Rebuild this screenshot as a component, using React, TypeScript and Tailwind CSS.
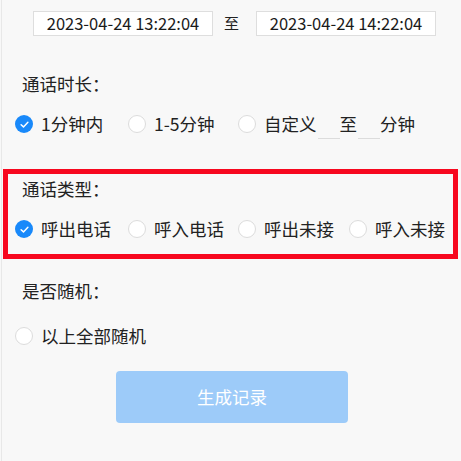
import React from "react";

const font = { fontFamily: '"Noto Sans CJK SC", "Noto Sans", sans-serif' };

function Radio({ checked, label }: { checked?: boolean; label?: string }) {
  return (
    <div className="flex items-center">
      {checked ? (
        <span className="flex h-[18px] w-[18px] shrink-0 items-center justify-center rounded-full bg-[#1989fa]">
          <svg width="11" height="11" viewBox="0 0 12 12" fill="none">
            <path d="M2.3 6.2 L4.9 8.6 L9.7 3.6" stroke="#fff" strokeWidth="1.6" strokeLinecap="round" strokeLinejoin="round" />
          </svg>
        </span>
      ) : (
        <span className="h-[18px] w-[18px] shrink-0 rounded-full border border-[#dcdcdc] bg-white" />
      )}
      {label && <span className="ml-[8px] whitespace-nowrap text-[17.5px] leading-[24px] text-[#222]">{label}</span>}
    </div>
  );
}

export default function App() {
  return (
    <div className="h-[461px] w-[461px] overflow-hidden bg-[#f8f8f8] pl-[1px]" style={font}>
      <div className="h-full border-l border-[#e8e8e8]">
        {/* date row */}
        <div className="flex items-center pt-[11px]">
          <div className="ml-[31px] flex h-[25px] w-[180px] items-center justify-center border border-[#dedede] bg-white text-[16.5px] text-[#1a1a1a]">
            2023-04-24 13:22:04
          </div>
          <span className="ml-[11px] mr-[17px] text-[15px] text-[#222]">至</span>
          <div className="flex h-[25px] w-[180px] items-center justify-center border border-[#dedede] bg-white text-[16.5px] text-[#1a1a1a]">
            2023-04-24 14:22:04
          </div>
        </div>

        {/* 通话时长 */}
        <div className="mt-[36px] pl-[20px] text-[17.5px] leading-[24px] text-[#222]">通话时长：</div>
        <div className="mt-[16px] flex h-[24px] items-center pl-[13px]">
          <div className="w-[113px]">
            <Radio checked label="1分钟内" />
          </div>
          <div className="w-[110px]">
            <Radio label="1-5分钟" />
          </div>
          <div className="flex h-[24px] items-center">
            <Radio label="自定义" />
            <span className="ml-[1px] mt-[6px] h-[24px] w-[22px] border-b border-[#dcdcdc]" />
            <span className="text-[17.5px] leading-[24px] text-[#222]">至</span>
            <span className="ml-[1px] mt-[6px] h-[24px] w-[22px] border-b border-[#dcdcdc]" />
            <span className="text-[17.5px] leading-[24px] text-[#222]">分钟</span>
          </div>
        </div>

        {/* 通话类型 (highlighted) */}
        <div className="ml-[1px] mt-[33px] w-[455px] border-[5px] border-[#f7081f] pb-[13px] pl-[7px] pt-[3px]">
          <div className="pl-[7px] text-[17.5px] leading-[24px] text-[#222]">通话类型：</div>
          <div className="mt-[16px] flex h-[24px] items-center">
            <div className="w-[113px]">
              <Radio checked label="呼出电话" />
            </div>
            <div className="w-[110px]">
              <Radio label="呼入电话" />
            </div>
            <div className="w-[111px]">
              <Radio label="呼出未接" />
            </div>
            <div>
              <Radio label="呼入未接" />
            </div>
          </div>
        </div>

        {/* 是否随机 */}
        <div className="mt-[20px] pl-[20px] text-[17.5px] leading-[24px] text-[#222]">是否随机：</div>
        <div className="mt-[21px] flex h-[24px] items-center pl-[13px]">
          <Radio label="以上全部随机" />
        </div>

        <button className="ml-[114px] mt-[23px] flex h-[52px] w-[232px] items-center justify-center rounded-[4px] bg-[#9dcbf9] text-[17.5px] text-white">
          生成记录
        </button>
      </div>
    </div>
  );
}
